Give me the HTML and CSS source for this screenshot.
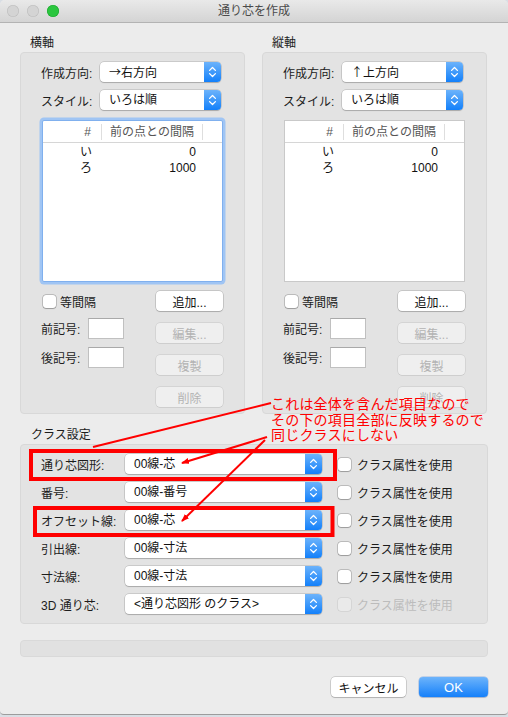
FILE: index.html
```html
<!DOCTYPE html>
<html lang="ja">
<head>
<meta charset="utf-8">
<title>通り芯を作成</title>
<link rel="stylesheet" href="styles.css">
</head>
<body>
<div class="window">
  <div class="titlebar">
    <div class="lights"><span class="light off"></span><span class="light off"></span><span class="light green"></span></div>
    <div class="title">通り芯を作成</div>
    <div></div>
  </div>
  <div class="content">
    <div class="axes">
      <section class="axis">
        <div class="group-label">横軸</div>
        <div class="box axis-box">
          <div class="field"><span class="flabel">作成方向:</span><div class="popup"><span class="ptext"><span class="cjk">→</span>右方向</span><span class="stepper"><svg width="17" height="20" viewBox="0 0 17 20"><path d="M5.6 8.4 8.5 5.5 11.4 8.4M5.6 11.6 8.5 14.5 11.4 11.6" fill="none" stroke="#fff" stroke-width="1.3" stroke-linecap="round" stroke-linejoin="round"/></svg></span></div></div>
          <div class="field"><span class="flabel">スタイル:</span><div class="popup"><span class="ptext">いろは順</span><span class="stepper"><svg width="17" height="20" viewBox="0 0 17 20"><path d="M5.6 8.4 8.5 5.5 11.4 8.4M5.6 11.6 8.5 14.5 11.4 11.6" fill="none" stroke="#fff" stroke-width="1.3" stroke-linecap="round" stroke-linejoin="round"/></svg></span></div></div>
          <div class="table focused">
            <div class="thead"><span class="c1">#</span><span class="c2">前の点との間隔</span></div>
            <div class="tbody">
              <div class="trow"><span class="c1">い</span><span class="c2">0</span></div>
              <div class="trow"><span class="c1">ろ</span><span class="c2">1000</span></div>
            </div>
          </div>
          <div class="axis-bottom">
            <div class="bl">
              <div class="chk-row"><span class="cb"></span><span>等間隔</span></div>
              <div class="inrow"><span class="inlabel">前記号:</span><span class="tinput"></span></div>
              <div class="inrow"><span class="inlabel">後記号:</span><span class="tinput"></span></div>
            </div>
            <div class="br">
              <button class="btn">追加...</button>
              <button class="btn dis">編集...</button>
              <button class="btn dis">複製</button>
              <button class="btn dis">削除</button>
            </div>
          </div>
        </div>
      </section>
      <section class="axis">
        <div class="group-label">縦軸</div>
        <div class="box axis-box">
          <div class="field"><span class="flabel">作成方向:</span><div class="popup"><span class="ptext"><span class="cjk">↑</span>上方向</span><span class="stepper"><svg width="17" height="20" viewBox="0 0 17 20"><path d="M5.6 8.4 8.5 5.5 11.4 8.4M5.6 11.6 8.5 14.5 11.4 11.6" fill="none" stroke="#fff" stroke-width="1.3" stroke-linecap="round" stroke-linejoin="round"/></svg></span></div></div>
          <div class="field"><span class="flabel">スタイル:</span><div class="popup"><span class="ptext">いろは順</span><span class="stepper"><svg width="17" height="20" viewBox="0 0 17 20"><path d="M5.6 8.4 8.5 5.5 11.4 8.4M5.6 11.6 8.5 14.5 11.4 11.6" fill="none" stroke="#fff" stroke-width="1.3" stroke-linecap="round" stroke-linejoin="round"/></svg></span></div></div>
          <div class="table">
            <div class="thead"><span class="c1">#</span><span class="c2">前の点との間隔</span></div>
            <div class="tbody">
              <div class="trow"><span class="c1">い</span><span class="c2">0</span></div>
              <div class="trow"><span class="c1">ろ</span><span class="c2">1000</span></div>
            </div>
          </div>
          <div class="axis-bottom">
            <div class="bl">
              <div class="chk-row"><span class="cb"></span><span>等間隔</span></div>
              <div class="inrow"><span class="inlabel">前記号:</span><span class="tinput"></span></div>
              <div class="inrow"><span class="inlabel">後記号:</span><span class="tinput"></span></div>
            </div>
            <div class="br">
              <button class="btn">追加...</button>
              <button class="btn dis">編集...</button>
              <button class="btn dis">複製</button>
              <button class="btn dis">削除</button>
            </div>
          </div>
        </div>
      </section>
    </div>

    <div class="class-label">クラス設定</div>
    <div class="box class-box">
      <div class="crow"><span class="clabel">通り芯図形:</span><div class="popup wide"><span class="ptext">00線-芯</span><span class="stepper"><svg width="17" height="20" viewBox="0 0 17 20"><path d="M5.6 8.4 8.5 5.5 11.4 8.4M5.6 11.6 8.5 14.5 11.4 11.6" fill="none" stroke="#fff" stroke-width="1.3" stroke-linecap="round" stroke-linejoin="round"/></svg></span></div><div class="cchk"><span class="cb"></span><span>クラス属性を使用</span></div></div>
      <div class="crow"><span class="clabel">番号:</span><div class="popup wide"><span class="ptext">00線-番号</span><span class="stepper"><svg width="17" height="20" viewBox="0 0 17 20"><path d="M5.6 8.4 8.5 5.5 11.4 8.4M5.6 11.6 8.5 14.5 11.4 11.6" fill="none" stroke="#fff" stroke-width="1.3" stroke-linecap="round" stroke-linejoin="round"/></svg></span></div><div class="cchk"><span class="cb"></span><span>クラス属性を使用</span></div></div>
      <div class="crow"><span class="clabel">オフセット線:</span><div class="popup wide"><span class="ptext">00線-芯</span><span class="stepper"><svg width="17" height="20" viewBox="0 0 17 20"><path d="M5.6 8.4 8.5 5.5 11.4 8.4M5.6 11.6 8.5 14.5 11.4 11.6" fill="none" stroke="#fff" stroke-width="1.3" stroke-linecap="round" stroke-linejoin="round"/></svg></span></div><div class="cchk"><span class="cb"></span><span>クラス属性を使用</span></div></div>
      <div class="crow"><span class="clabel">引出線:</span><div class="popup wide"><span class="ptext">00線-寸法</span><span class="stepper"><svg width="17" height="20" viewBox="0 0 17 20"><path d="M5.6 8.4 8.5 5.5 11.4 8.4M5.6 11.6 8.5 14.5 11.4 11.6" fill="none" stroke="#fff" stroke-width="1.3" stroke-linecap="round" stroke-linejoin="round"/></svg></span></div><div class="cchk"><span class="cb"></span><span>クラス属性を使用</span></div></div>
      <div class="crow"><span class="clabel">寸法線:</span><div class="popup wide"><span class="ptext">00線-寸法</span><span class="stepper"><svg width="17" height="20" viewBox="0 0 17 20"><path d="M5.6 8.4 8.5 5.5 11.4 8.4M5.6 11.6 8.5 14.5 11.4 11.6" fill="none" stroke="#fff" stroke-width="1.3" stroke-linecap="round" stroke-linejoin="round"/></svg></span></div><div class="cchk"><span class="cb"></span><span>クラス属性を使用</span></div></div>
      <div class="crow"><span class="clabel">3D 通り芯:</span><div class="popup wide"><span class="ptext">&lt;通り芯図形 のクラス&gt;</span><span class="stepper"><svg width="17" height="20" viewBox="0 0 17 20"><path d="M5.6 8.4 8.5 5.5 11.4 8.4M5.6 11.6 8.5 14.5 11.4 11.6" fill="none" stroke="#fff" stroke-width="1.3" stroke-linecap="round" stroke-linejoin="round"/></svg></span></div><div class="cchk dis"><span class="cb"></span><span>クラス属性を使用</span></div></div>
    </div>

    <div class="statusbar"></div>

    <div class="actions">
      <button class="btn cancel">キャンセル</button>
      <button class="btn ok">OK</button>
    </div>
  </div>

  <svg class="annot" width="508" height="715" viewBox="0 0 508 715">
    <defs>
      <marker id="ah" markerUnits="userSpaceOnUse" markerWidth="8" markerHeight="6" refX="7" refY="3" orient="auto">
        <path d="M0,0 L8,3 L0,6 z" fill="#ff0000"/>
      </marker>
    </defs>
    <rect x="31" y="451" width="304" height="28" fill="none" stroke="#ff0000" stroke-width="4"/>
    <rect x="35" y="508" width="297.5" height="27" fill="none" stroke="#ff0000" stroke-width="4"/>
    <line x1="271" y1="403" x2="93" y2="447" stroke="#ff0000" stroke-width="2"/>
    <line x1="267" y1="437" x2="182" y2="463" stroke="#ff0000" stroke-width="2" marker-end="url(#ah)"/>
    <line x1="265" y1="440" x2="182" y2="521" stroke="#ff0000" stroke-width="2" marker-end="url(#ah)"/>
  </svg>
  <div class="note">これは全体を含んだ項目なので<br>その下の項目全部に反映するので<br>同じクラスにしない</div>
</div>
</body>
</html>
```

FILE: styles.css
```css
* { box-sizing: border-box; }
html, body { margin: 0; padding: 0; }
html { background: #d9dee4; }
body {
  width: 508px;
  height: 717px;
  overflow: hidden;
  font-family: "Liberation Sans", "Noto Sans CJK JP", sans-serif;
  font-size: 12px;
  color: #1c1c1c;
}
.window {
  position: relative;
  width: 508px;
  height: 715px;
  background: #ececec;
  border-radius: 5px 5px 4px 4px;
  border-bottom: 1px solid #9c9c9c;
  overflow: hidden;
}
.titlebar {
  height: 23px;
  background: linear-gradient(#e9e9e9, #d4d4d4);
  border-bottom: 1px solid #b3b3b3;
  display: grid;
  grid-template-columns: 1fr auto 1fr;
  align-items: center;
}
.lights { display: flex; gap: 8px; padding-left: 7px; }
.light { width: 12px; height: 12px; border-radius: 50%; }
.light.off { background: #d4d4d4; box-shadow: inset 0 0 0 0.6px #bdbdbd; }
.light.green { background: #2bc63f; box-shadow: inset 0 0 0 0.6px #1ea930; }
.title { color: #4a4a4a; font-size: 12px; line-height: 22px; }

.content { padding: 12px 20px 0 20px; }
.axes { display: grid; grid-template-columns: 225px 225px; column-gap: 17px; }
.group-label { height: 17px; line-height: 17px; padding-left: 10px; }
.box { background: #e3e3e3; border: 1px solid #d8d8d8; border-radius: 4px; }
.axis-box { padding: 9px 0 6px 20px; }

.field { display: flex; align-items: center; height: 20px; }
.field + .field { margin-top: 8px; }
.flabel { width: 59px; white-space: nowrap; }
.popup {
  width: 121px;
  height: 20px;
  display: flex;
  background: #fff;
  border-radius: 4px;
  box-shadow: 0 0 0 0.5px rgba(0,0,0,0.22), 0 1px 1px rgba(0,0,0,0.16);
}
.popup.wide { width: 197px; }
.ptext { flex: 1; padding-left: 9px; line-height: 20px; white-space: nowrap; color: #111; }
.cjk { font-family: "Noto Sans CJK JP", sans-serif; }
.stepper {
  width: 17px;
  height: 20px;
  display: flex;
  background: linear-gradient(#6cb3fb, #1380fa);
  border-radius: 0 4px 4px 0;
}

.table {
  margin: 10px 0 0 1px;
  width: 181px;
  height: 162px;
  background: #fff;
  border: 1px solid #c9c9c9;
}
.table.focused {
  border-color: #80b0ee;
  border-radius: 2px;
  box-shadow: 0 0 0 2.5px #a0c5f4;
}
.thead {
  display: flex;
  align-items: center;
  height: 22px;
  border-bottom: 1px solid #d6d6d6;
  color: #555;
}
.thead .c1, .thead .c2 { border-right: 1px solid #dedede; line-height: 16px; }
.c1 { width: 59px; text-align: right; padding-right: 10px; }
.c2 { width: 101px; text-align: center; white-space: nowrap; }
.tbody { padding-top: 1px; }
.trow { display: flex; height: 16px; line-height: 16px; color: #111; }
.trow .c2 { text-align: right; padding-right: 7px; }

.axis-bottom { display: flex; margin-top: 9px; }
.bl { width: 115px; }
.br { width: 67px; display: flex; flex-direction: column; gap: 12px; }
.chk-row { display: flex; align-items: center; gap: 4px; height: 20px; padding-left: 2px; }
.cb {
  width: 13px;
  height: 13px;
  flex: none;
  background: #fff;
  border-radius: 3px;
  box-shadow: 0 0 0 0.5px rgba(0,0,0,0.32), 0 0.5px 1px rgba(0,0,0,0.18);
}
.inrow { display: flex; align-items: center; margin-top: 7px; }
.inrow + .inrow { margin-top: 8px; }
.inlabel { width: 47px; white-space: nowrap; }
.tinput {
  width: 36px;
  height: 21px;
  background: #fff;
  border: 1px solid #c0c0c0;
  border-top-color: #a9a9a9;
}

.btn {
  height: 20px;
  width: 67px;
  padding: 0;
  font: inherit;
  color: #111;
  background: #fff;
  border: none;
  border-radius: 4px;
  box-shadow: 0 0 0 0.5px rgba(0,0,0,0.25), 0 1px 1px rgba(0,0,0,0.14);
}
.btn.dis {
  background: #efefef;
  color: #b3b3b3;
  box-shadow: 0 0 0 0.5px rgba(0,0,0,0.13), 0 0.5px 0.5px rgba(0,0,0,0.06);
}

.class-label { margin-top: 13px; height: 17px; line-height: 17px; padding-left: 11px; }
.class-box { padding: 9px 0 9px 20px; }
.crow { display: flex; align-items: center; height: 20px; }
.crow + .crow { margin-top: 8px; }
.clabel { width: 84px; white-space: nowrap; }
.cchk { display: flex; align-items: center; gap: 6px; margin-left: 16px; white-space: nowrap; }
.cchk.dis { color: #bcbcbc; }
.cchk.dis .cb { background: #eaeaea; box-shadow: 0 0 0 0.5px rgba(0,0,0,0.12); }

.statusbar {
  margin-top: 16px;
  height: 17px;
  background: #e1e1e1;
  border: 1px solid #d9d9d9;
  border-radius: 4px;
}
.actions { display: flex; justify-content: flex-end; gap: 13px; margin-top: 20px; }
.btn.cancel { width: 75px; }
.btn.ok {
  width: 69px;
  color: #fff;
  font-size: 13px;
  background: linear-gradient(#6db4fb, #1580fa);
  box-shadow: 0 0 0 0.5px rgba(0,80,200,0.35), 0 1px 1px rgba(0,0,0,0.14);
}

.annot { position: absolute; left: 0; top: 0; pointer-events: none; }
.note {
  position: absolute;
  left: 271px;
  top: 396px;
  color: #ff0000;
  font-family: "Noto Sans CJK JP", sans-serif;
  font-size: 14px;
  line-height: 15.5px;
  letter-spacing: 0.2px;
  white-space: nowrap;
}
```
